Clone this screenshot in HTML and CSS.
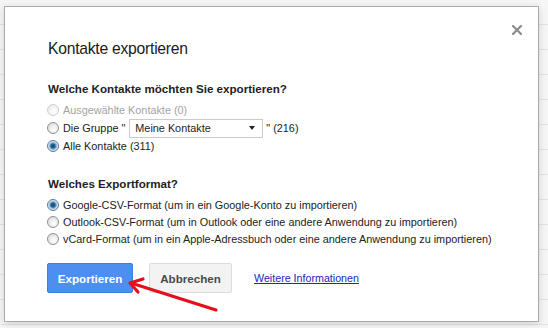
FILE: index.html
```html
<!DOCTYPE html>
<html lang="de">
<head>
<meta charset="utf-8">
<title>Kontakte exportieren</title>
<link rel="stylesheet" href="styles.css">
</head>
<body>
<ul class="bg-list" aria-hidden="true">
  <li></li><li></li><li></li><li></li><li></li><li></li><li></li>
  <li></li><li></li><li></li><li></li><li></li><li></li>
</ul>

<div class="dialog" role="dialog">
  <span class="close" aria-label="Schließen">
    <svg viewBox="0 0 10 10" width="10" height="10"><path d="M1 1 L9 9 M9 1 L1 9" stroke="#8c8c8c" stroke-width="2.2" stroke-linecap="square" fill="none"/></svg>
  </span>
  <h1 class="title">Kontakte exportieren</h1>

  <section class="group">
    <h2 class="question">Welche Kontakte möchten Sie exportieren?</h2>
    <div class="options">
      <div class="opt is-disabled"><span class="radio"></span>Ausgewählte Kontakte (0)</div>
      <div class="opt"><span class="radio"></span>Die Gruppe "<span class="select">Meine Kontakte<span class="caret"></span></span>" (216)</div>
      <div class="opt"><span class="radio is-checked"></span>Alle Kontakte (311)</div>
    </div>
  </section>

  <section class="group group-format">
    <h2 class="question">Welches Exportformat?</h2>
    <div class="options options-compact">
      <div class="opt"><span class="radio is-checked"></span>Google-CSV-Format (um in ein Google-Konto zu importieren)</div>
      <div class="opt"><span class="radio"></span>Outlook-CSV-Format (um in Outlook oder eine andere Anwendung zu importieren)</div>
      <div class="opt"><span class="radio"></span>vCard-Format (um in ein Apple-Adressbuch oder eine andere Anwendung zu importieren)</div>
    </div>
  </section>

  <div class="actions">
    <span class="btn btn-primary">Exportieren</span>
    <span class="btn btn-default">Abbrechen</span>
    <a class="more" href="#">Weitere Informationen</a>
  </div>
</div>

<svg class="arrow" width="548" height="328" viewBox="0 0 548 328">
  <path d="M131 283 L216 310" stroke="#e3101c" stroke-width="3.2" fill="none" stroke-linecap="round"/>
  <path d="M143 279 L130 283 L138 292" stroke="#e3101c" stroke-width="3.2" fill="none" stroke-linecap="round" stroke-linejoin="round"/>
</svg>
</body>
</html>
```

FILE: styles.css
```css
html, body {
  margin: 0;
  padding: 0;
}

body {
  width: 548px;
  height: 328px;
  overflow: hidden;
  position: relative;
  background: #f6f6f6;
  font-family: "Liberation Sans", Arial, sans-serif;
}

.bg-list {
  list-style: none;
  margin: 0;
  padding: 0;
}

.bg-list li {
  height: 24px;
  border-bottom: 1px solid #e3e3e3;
}

.dialog {
  position: absolute;
  left: 4px;
  top: 6px;
  width: 535px;
  height: 316px;
  box-sizing: border-box;
  background: #fff;
  border: 1px solid #acacac;
  box-shadow: 0 2px 8px rgba(0, 0, 0, 0.15);
  padding: 33px 0 0 43px;
  color: #222;
}

.close {
  position: absolute;
  top: 18px;
  right: 16px;
  width: 10px;
  height: 10px;
  display: block;
}

.close svg {
  display: block;
}

.title {
  margin: 0;
  font-size: 15.7px;
  font-weight: normal;
  line-height: 18px;
  letter-spacing: -0.25px;
  color: #1a1a1a;
}

.group {
  margin-top: 23px;
}

.group-format {
  margin-top: 21px;
}

.question {
  margin: 0;
  font-size: 11.6px;
  font-weight: bold;
  line-height: 16px;
  color: #222;
}

.options {
  margin-top: 4px;
  display: flex;
  flex-direction: column;
}

.opt {
  display: flex;
  align-items: center;
  height: 18px;
  font-size: 10.85px;
  color: #222;
  white-space: nowrap;
}

.options-compact .opt {
  height: 17px;
}

.opt.is-disabled {
  color: #a3a3a3;
}

.radio {
  flex: none;
  width: 12px;
  height: 12px;
  box-sizing: border-box;
  border-radius: 50%;
  border: 1px solid #8e8f8f;
  background: radial-gradient(circle at 60% 65%, #ffffff 0, #f1f1f1 35%, #d2d2d2 100%);
  margin: 0 4px 0 -1px;
}

.opt.is-disabled .radio {
  border-color: #cfcfcf;
  background: radial-gradient(circle at 60% 65%, #ffffff 0, #f6f6f6 40%, #e6e6e6 100%);
}

.radio.is-checked {
  border-color: #5b7a99;
  background: radial-gradient(circle, #1b4f7e 0, #245c8e 2px, #6fa3cf 3px, #cfe2f3 4.5px, #eef4fa 6px);
}

.select {
  display: inline-flex;
  align-items: center;
  width: 134px;
  height: 19px;
  box-sizing: border-box;
  border: 1px solid #cbcbcb;
  background: #fff;
  margin: 0 3px 0 4px;
  padding-left: 5px;
  color: #222;
}

.caret {
  margin-left: auto;
  margin-right: 7px;
  width: 0;
  height: 0;
  border-left: 3.5px solid transparent;
  border-right: 3.5px solid transparent;
  border-top: 4px solid #222;
}

.actions {
  margin-top: 16px;
  display: flex;
  align-items: center;
}

.btn {
  height: 30px;
  box-sizing: border-box;
  border-radius: 2px;
  display: inline-flex;
  align-items: center;
  justify-content: center;
  font-size: 11.6px;
  font-weight: bold;
}

.btn-primary {
  width: 86px;
  margin-left: -1px;
  background: #4d8ff0;
  border: 1px solid #3c7ee3;
  color: #fff;
}

.btn-default {
  width: 83px;
  margin-left: 16px;
  background: #f3f3f3;
  border: 1px solid #dcdcdc;
  color: #4a4a4a;
}

.more {
  margin-left: 22px;
  font-size: 10.7px;
  color: #2424c0;
  text-decoration: underline;
}

.arrow {
  position: absolute;
  left: 0;
  top: 0;
  pointer-events: none;
}
```
